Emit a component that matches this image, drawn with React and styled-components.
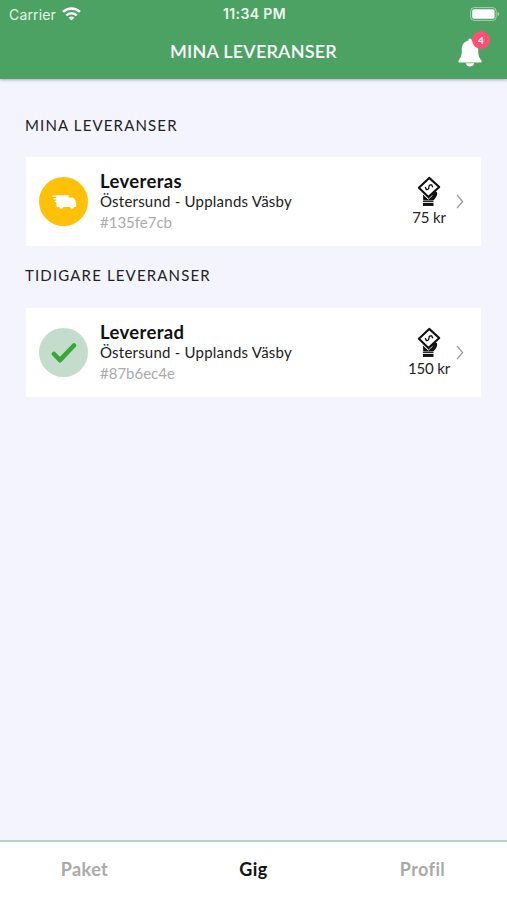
import React from 'react'
import styled, { createGlobalStyle } from 'styled-components'

const deliveries = [
    { id: '#135fe7cb', status: 'Levereras', route: 'Östersund - Upplands Väsby', price: '75 kr', done: false },
]

const earlierDeliveries = [
    { id: '#87b6ec4e', status: 'Levererad', route: 'Östersund - Upplands Väsby', price: '150 kr', done: true },
]

const WifiIcon = () => (
    <svg width="19" height="14" viewBox="0 0 19 14" fill="none" stroke="#fff" strokeWidth="2.5">
        <path d="M1 4.9C5.8 0.3 13.2 0.3 18 4.9" />
        <path d="M4.2 8.4C7.2 5.5 11.8 5.5 14.8 8.4" />
        <path d="M9.5 13.6L6.6 10.7C8.2 9.2 10.8 9.2 12.4 10.7Z" fill="#fff" stroke="none" />
    </svg>
)

const BatteryIcon = () => (
    <svg width="30" height="14" viewBox="0 0 30 14">
        <rect x="0.6" y="0.6" width="25.6" height="12.8" rx="3.6" fill="none" stroke="#fff" strokeOpacity="0.5" />
        <rect x="2.2" y="2.2" width="22.4" height="9.6" rx="1.8" fill="#fff" />
        <path d="M27.6 4.9C29.6 5.6 29.6 8.4 27.6 9.1Z" fill="#fff" fillOpacity="0.55" />
    </svg>
)

const BellIcon = () => (
    <svg width="24" height="29" viewBox="0 0 24 29" fill="#fff">
        <path d="M12 0.5C13 0.5 13.7 1.2 13.7 2.5C17.8 3.5 20.2 6.9 20.2 11.3C20.2 17.5 21 19.7 23.4 22.4C24 23.4 23.5 24.5 22.4 24.5H1.6C0.5 24.5 0 23.4 0.6 22.4C3 19.7 3.8 17.5 3.8 11.3C3.8 6.9 6.2 3.5 10.3 2.5C10.3 1.2 11 0.5 12 0.5Z" />
        <path d="M7.8 25.3H16.2C15.7 27.6 14.1 28.6 12 28.6C9.9 28.6 8.3 27.6 7.8 25.3Z" />
    </svg>
)

const TruckIcon = () => (
    <svg width="26" height="16" viewBox="0 0 26 16" fill="#fff">
        <path d="M5.3 1.2H17.6V3.6H20.8C22.3 3.6 23.5 4.8 24.4 6.6C25.2 8.2 25.3 10.5 25 13H23.2A2.1 2.1 0 0 1 19.1 13H12.4A2.2 2.2 0 0 1 8.1 13H6.3C5.7 13 5.3 12.6 5.3 12Z" />
        <path d="M1 2.2H6M2.6 4.8H6M4 7.4H6" stroke="#fff" strokeWidth="1.2" />
    </svg>
)

const CheckIcon = () => (
    <svg width="26" height="22" viewBox="0 0 26 22" fill="none" stroke="#37a835" strokeWidth="4.6" strokeLinecap="round" strokeLinejoin="round">
        <path d="M3 12L9 18.2L22.9 3.5" />
    </svg>
)

const CashIcon = () => (
    <svg width="24" height="31" viewBox="0 0 24 31" fill="none" stroke="#111">
        <path d="M6 18.2L10.8 22.6L16.8 17C18 15.8 20.4 16 20.2 18C20 20 18.4 22.6 16.2 24.4H6.2Z" fill="#111" stroke="none" />
        <path d="M6.4 18.6L11.3 23.2L16 18.8" stroke="#fff" strokeWidth="0.9" />
        <path d="M12.2 1.9L22.2 11L11.4 20.9L1.9 11.7Z" fill="#fff" strokeWidth="2.1" strokeLinejoin="round" />
        <path d="M15.2 18.2L17.6 14.8L20 16.2L18.8 20L16 21.5Z" fill="#111" stroke="none" />
        <path d="M8.6 12.6C9.4 14.7 12 13.4 11.9 11.3C11.8 9 14.4 7.8 15.3 10M8.2 11L9.6 13.9M14.4 8.4L15.8 11.2" strokeWidth="1.3" />
        <path d="M5.9 25.4H16.5" strokeWidth="1" />
        <path d="M5.9 28.4H16.5" strokeWidth="3.1" />
    </svg>
)

const ChevronIcon = () => (
    <svg width="8" height="15" viewBox="0 0 8 15" fill="none" stroke="#999" strokeWidth="1.3">
        <path d="M1 0.8L6.6 7.5L1 14.2" />
    </svg>
)

function DeliveryCard({ delivery }) {
    return (
        <Card>
            <StatusCircle $done={delivery.done}>
                {delivery.done ? <CheckIcon /> : <TruckIcon />}
            </StatusCircle>
            <Info>
                <Status>{delivery.status}</Status>
                <Route>{delivery.route}</Route>
                <Hash>{delivery.id}</Hash>
            </Info>
            <Price>
                <CashIcon />
                <span>{delivery.price}</span>
            </Price>
            <ChevronIcon />
        </Card>
    )
}

function App() {
    return (
        <Screen>
            <GlobalStyle />
            <Header>
                <StatusBar>
                    <Carrier>
                        <span>Carrier</span>
                        <WifiIcon />
                    </Carrier>
                    <Clock>11:34 PM</Clock>
                    <Battery><BatteryIcon /></Battery>
                </StatusBar>
                <TitleBar>
                    <Title>MINA LEVERANSER</Title>
                    <Bell>
                        <BellIcon />
                        <Badge>4</Badge>
                    </Bell>
                </TitleBar>
            </Header>
            <Content>
                <SectionTitle>MINA LEVERANSER</SectionTitle>
                {deliveries.map((d) => <DeliveryCard key={d.id} delivery={d} />)}
                <SectionTitle>TIDIGARE LEVERANSER</SectionTitle>
                {earlierDeliveries.map((d) => <DeliveryCard key={d.id} delivery={d} />)}
            </Content>
            <TabBar>
                <Tab>Paket</Tab>
                <Tab $active>Gig</Tab>
                <Tab>Profil</Tab>
            </TabBar>
        </Screen>
    )
}

const GlobalStyle = createGlobalStyle`
    * {
        box-sizing: border-box;
    }
    body {
        margin: 0;
        font-family: Lato, sans-serif;
    }
    svg {
        display: block;
        flex-shrink: 0;
    }
`

const Screen = styled.div`
    display: flex;
    flex-direction: column;
    height: 100vh;
    background: #f3f4fe;
    overflow: hidden;
`

const Header = styled.header`
    height: 79px;
    background: #4ca262;
    color: white;
    box-shadow: 0 1px 3px rgba(0, 0, 0, 0.3);
`

const StatusBar = styled.div`
    display: grid;
    grid-template-columns: 1fr auto 1fr;
    align-items: center;
    height: 26px;
    padding: 0 7px 0 9px;
    font-family: Inter, sans-serif;
`

const Carrier = styled.div`
    display: flex;
    align-items: center;
    gap: 6px;
    font-size: 14px;
    letter-spacing: 0.15px;
    color: #e6f5e9;
`

const Clock = styled.div`
    font-size: 14px;
    font-weight: 600;
    letter-spacing: 0.4px;
    line-height: 28px;
    color: #eefaf0;
`

const Battery = styled.div`
    justify-self: end;
`

const TitleBar = styled.div`
    display: grid;
    grid-template-columns: 1fr auto 1fr;
    align-items: center;
    height: 50px;
    padding: 0 25px;
`

const Title = styled.h1`
    grid-column: 2;
    margin: 0;
    font-size: 18px;
    font-weight: 600;
    line-height: 24px;
    letter-spacing: 0.22px;
`

const Bell = styled.div`
    position: relative;
    justify-self: end;
    margin-top: 2px;
`

const Badge = styled.span`
    position: absolute;
    top: -7px;
    right: -8px;
    width: 18px;
    height: 18px;
    border-radius: 50%;
    background: #ff4f72;
    font-size: 10px;
    font-weight: 700;
    line-height: 18px;
    text-align: center;
`

const Content = styled.main`
    flex: 1;
    padding: 31px 26px 0;
`

const SectionTitle = styled.h2`
    margin: 0 0 0 -1px;
    height: 47px;
    font-size: 15px;
    font-weight: 400;
    line-height: 30px;
    letter-spacing: 1.15px;
    color: #222;
`

const Card = styled.article`
    display: flex;
    align-items: center;
    height: 89px;
    margin-bottom: 15px;
    padding: 0 17px 0 13px;
    background: white;

    & + h2 {
        margin-top: -1px;
        height: 48px;
    }
`

const StatusCircle = styled.div`
    display: flex;
    align-items: center;
    justify-content: center;
    width: 49px;
    height: 49px;
    border-radius: 50%;
    background: ${(props) => (props.$done ? '#c4dccb' : '#ffc107')};
`

const Info = styled.div`
    flex: 1;
    margin-left: 12px;
    line-height: 20.5px;
`

const Status = styled.div`
    font-size: 18.5px;
    font-weight: 700;
    letter-spacing: 0.35px;
    color: #111;
`

const Route = styled.div`
    font-size: 15px;
    letter-spacing: 0.22px;
    color: #222;
`

const Hash = styled.div`
    font-size: 15px;
    color: #aaa;
`

const Price = styled.div`
    display: flex;
    flex-direction: column;
    align-items: center;
    width: 54px;
    font-size: 15px;
    line-height: 20px;
    letter-spacing: -0.2px;
    color: #222;
`

const TabBar = styled.nav`
    display: grid;
    grid-template-columns: repeat(3, 1fr);
    height: 60px;
    border-top: 2px solid #b5d4bc;
    background: white;
`

const Tab = styled.div`
    font-size: 18px;
    font-weight: 700;
    line-height: 54px;
    letter-spacing: 0.4px;
    text-align: center;
    color: ${(props) => (props.$active ? '#111' : '#aaa')};
`

export default App
